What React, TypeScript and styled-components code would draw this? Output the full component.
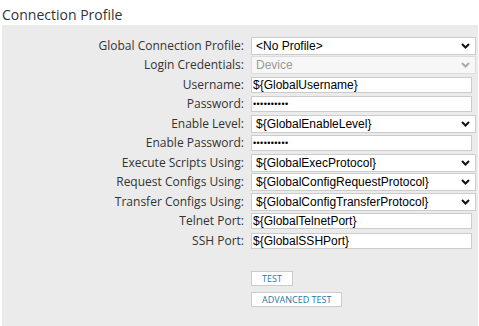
import { createGlobalStyle } from 'styled-components'
import styled from 'styled-components'

type Field =
  | { label: string; kind: 'select'; value: string; disabled?: boolean }
  | { label: string; kind: 'text' | 'password'; value: string }

const fields: Field[] = [
  { label: 'Global Connection Profile', kind: 'select', value: '<No Profile>' },
  { label: 'Login Credentials', kind: 'select', value: 'Device', disabled: true },
  { label: 'Username', kind: 'text', value: '${GlobalUsername}' },
  { label: 'Password', kind: 'password', value: 'xxxxxxxxxx' },
  { label: 'Enable Level', kind: 'select', value: '${GlobalEnableLevel}' },
  { label: 'Enable Password', kind: 'password', value: 'xxxxxxxxxx' },
  { label: 'Execute Scripts Using', kind: 'select', value: '${GlobalExecProtocol}' },
  { label: 'Request Configs Using', kind: 'select', value: '${GlobalConfigRequestProtocol}' },
  { label: 'Transfer Configs Using', kind: 'select', value: '${GlobalConfigTransferProtocol}' },
  { label: 'Telnet Port', kind: 'text', value: '${GlobalTelnetPort}' },
  { label: 'SSH Port', kind: 'text', value: '${GlobalSSHPort}' },
]

export default function App() {
  return (
    <>
      <GlobalStyle />
      <Page>
        <Title>Connection Profile</Title>
        <Panel>
          <Form>
            {fields.map((f) => (
              <Row key={f.label}>
                <Label>{f.label}:</Label>
                {f.kind === 'select' ? (
                  <SelectWrap>
                    <Select defaultValue={f.value} disabled={f.disabled}>
                      <option>{f.value}</option>
                    </Select>
                    <Chevron width="9" height="6" viewBox="0 0 9 6" $disabled={f.disabled}>
                      <path d="M1 1l3.5 3.5L8 1" fill="none" stroke="currentColor" strokeWidth="2" />
                    </Chevron>
                  </SelectWrap>
                ) : (
                  <Input type={f.kind} defaultValue={f.value} $password={f.kind === 'password'} />
                )}
              </Row>
            ))}
            <Buttons>
              <Button>Test</Button>
              <Button>Advanced Test</Button>
            </Buttons>
          </Form>
        </Panel>
      </Page>
    </>
  )
}

const GlobalStyle = createGlobalStyle`
  body {
    margin: 0;
    background: #fff;
    font-family: "Open Sans", "Liberation Sans", sans-serif;
  }
`

const Page = styled.div`
  width: 479px;
  height: 326px;
  overflow: hidden;
  padding-left: 2px;
  box-sizing: border-box;
`

const Title = styled.h2`
  margin: 0;
  padding-top: 5px;
  height: 20px;
  font-size: 14px;
  font-weight: 400;
  line-height: 19px;
  color: #333;
`

const Panel = styled.section`
  width: 476px;
  height: 310px;
  background: #ebebeb;
  padding-top: 11px;
  box-sizing: border-box;
`

const Form = styled.div`
  display: grid;
  grid-template-columns: 242px 225px;
  grid-auto-rows: 19.5px;
  column-gap: 7px;
`

const Row = styled.div`
  display: contents;
`

const Label = styled.label`
  align-self: center;
  text-align: right;
  white-space: nowrap;
  font-size: 12px;
  line-height: 16px;
  color: #333;
`

const SelectWrap = styled.div`
  position: relative;
  align-self: center;
  height: 18px;
`

const Select = styled.select`
  display: block;
  appearance: none;
  width: 225px;
  height: 18px;
  margin: 0;
  padding: 0 16px 0 4px;
  border: 1px solid #ccc;
  border-radius: 0;
  background: #fff;
  font-family: "Liberation Sans", Arial, sans-serif;
  font-size: 12px;
  line-height: 16px;
  color: #000;
  outline: none;

  &:disabled {
    background: #f7f7f7;
    border-color: #dcdcdc;
    color: #999;
    opacity: 1;
  }
`

const Chevron = styled.svg<{ $disabled?: boolean }>`
  position: absolute;
  right: 6px;
  top: 6px;
  pointer-events: none;
  color: ${({ $disabled }) => ($disabled ? '#aaa' : '#111')};
`

const Input = styled.input<{ $password?: boolean }>`
  display: block;
  align-self: center;
  width: 221px;
  height: 16px;
  margin: 0;
  padding: 0 1px;
  box-sizing: border-box;
  border: 1px solid #ccc;
  border-radius: 0;
  background: #fff;
  font-family: "Liberation Sans", Arial, sans-serif;
  font-size: ${({ $password }) => ($password ? '9px' : '12px')};
  letter-spacing: ${({ $password }) => ($password ? '0.4px' : 'normal')};
  color: #000;
  outline: none;
`

const Buttons = styled.div`
  grid-column: 2;
  display: flex;
  flex-direction: column;
  align-items: flex-start;
  gap: 6px;
  margin-top: 20px;
`

const Button = styled.button`
  height: 18px;
  padding: 0 10px;
  border: 1px solid #ccc;
  border-radius: 0;
  background: #fff;
  font-family: "Open Sans", sans-serif;
  font-size: 9px;
  text-transform: uppercase;
  color: #1f7ba5;
  cursor: pointer;

  &:last-child {
    height: 19px;
  }
`
